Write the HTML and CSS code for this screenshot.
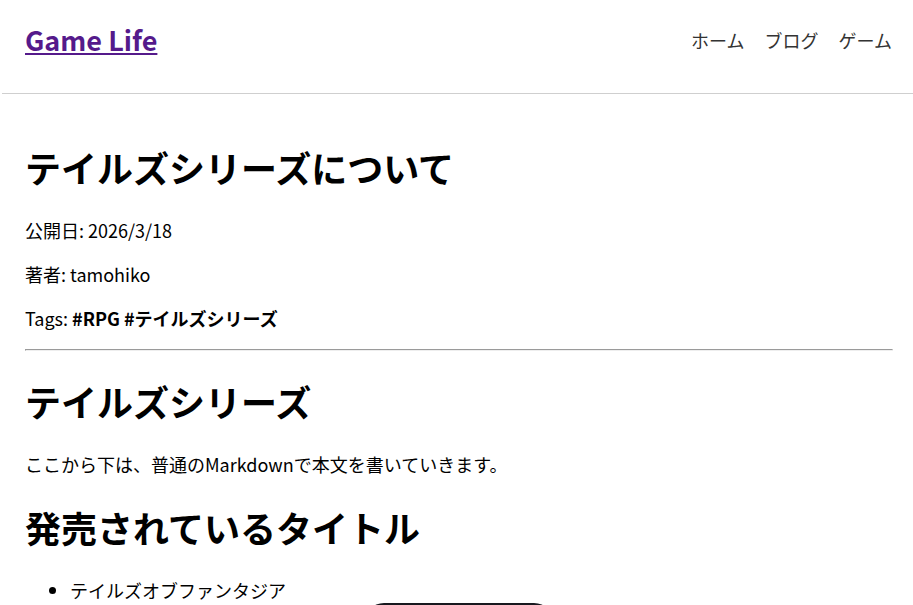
FILE: index.html
```html
<!DOCTYPE html>
<html lang="ja">
<head>
    <meta charset="UTF-8">
    <meta name="viewport" content="width=device-width, initial-scale=1.0">
    <title>テイルズシリーズについて | Game Life</title>
    <link rel="stylesheet" href="styles.css">
</head>
<body>

<header class="site-header">
    <a class="site-title" href="#">Game Life</a>
    <nav class="site-nav">
        <a href="#">ホーム</a>
        <a href="#">ブログ</a>
        <a href="#">ゲーム</a>
    </nav>
</header>

<main class="post">
    <h1>テイルズシリーズについて</h1>
    <p>公開日: 2026/3/18</p>
    <p>著者: tamohiko</p>
    <p>Tags: <strong>#RPG</strong> <strong>#テイルズシリーズ</strong></p>
    <hr>

    <h2>テイルズシリーズ</h2>
    <p>ここから下は、普通のMarkdownで本文を書いていきます。</p>

    <h2>発売されているタイトル</h2>
    <ul>
        <li>テイルズオブファンタジア</li>
    </ul>
</main>

<!-- dev toolbar peeking in at the bottom -->
<div class="dev-toolbar"></div>

</body>
</html>
```

FILE: styles.css
```css
body {
    margin: 0;
    font-family: 'Noto Sans CJK JP', 'Noto Sans', sans-serif;
    font-size: 18px;
    color: #000;
    background: #fff;
}

/* Header */
.site-header {
    display: flex;
    justify-content: space-between;
    align-items: center;
    margin-left: 2px;
    padding: 20px 21px 34px 23px;
    border-bottom: 1px solid #cfcfcf;
}

.site-title {
    font-size: 27px;
    font-weight: 700;
    color: #551a8b;
}

.site-nav {
    display: flex;
    gap: 20px;
}

.site-nav a {
    color: #333;
    text-decoration: none;
    font-size: 18px;
}

/* Post */
.post {
    padding: 23px 20px 0 25px;
}

.post h1,
.post h2 {
    font-size: 36px;
    font-weight: 700;
    margin: 24px 0;
}

.post p {
    margin: 18px 0;
}

.post hr {
    margin: 9px 0;
}

.post ul {
    margin: 18px 0;
    padding-left: 45px;
}

/* Toolbar */
.dev-toolbar {
    position: fixed;
    left: 50%;
    bottom: -38px;
    transform: translateX(-50%);
    width: 190px;
    height: 40px;
    margin-left: 2px;
    border-radius: 20px;
    background: #18191f;
}
```
